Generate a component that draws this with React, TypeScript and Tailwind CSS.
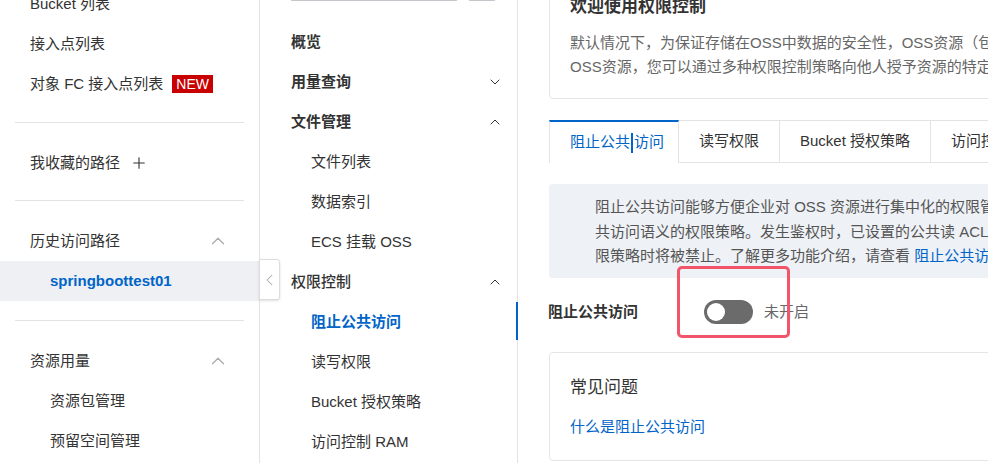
import { ChevronDown, ChevronLeft, ChevronUp, Plus } from "lucide-react";

const font = { fontFamily: '"Liberation Sans", "Noto Sans CJK SC", sans-serif' };

function SideRow({ children, indent = false, active = false, right }: { children: React.ReactNode; indent?: boolean; active?: boolean; right?: React.ReactNode }) {
  return (
    <div
      className={`h-[40px] flex items-center justify-between pr-[30px] ${indent ? "pl-[50px]" : "pl-[30px]"} ${
        active ? "bg-[#eef0f4] text-[#0064c8] font-bold" : "text-[#333]"
      }`}
    >
      <span className="flex items-center">{children}</span>
      {right}
    </div>
  );
}

function Divider() {
  return <div className="mx-[15px] h-px bg-[#e3e3e3]" />;
}

function NavRow({
  label,
  sub = false,
  weight = "",
  chevron,
  active = false,
}: {
  label: string;
  sub?: boolean;
  weight?: string;
  chevron?: "up" | "down";
  active?: boolean;
}) {
  return (
    <div
      className={`relative h-[40px] flex items-center justify-between pr-[14px] ${sub ? "pl-[51px]" : "pl-[31px]"} ${
        active ? "text-[#0064c8] font-bold" : "text-[#333]"
      } ${weight}`}
    >
      <span>{label}</span>
      {chevron === "up" && <ChevronUp size={16} strokeWidth={1.5} className="text-[#333]" />}
      {chevron === "down" && <ChevronDown size={16} strokeWidth={1.5} className="text-[#333]" />}
      {active && <div className="absolute right-[-1px] top-0 h-[38px] w-[2px] bg-[#0064c8]" />}
    </div>
  );
}

export default function App() {
  return (
    <div className="relative flex h-[463px] w-[988px] overflow-hidden bg-white text-[15px]" style={font}>
      {/* left sidebar */}
      <aside className="w-[260px] shrink-0 border-r border-[#e3e3e3]">
        <div className="-mt-[16px]">
          <SideRow>Bucket 列表</SideRow>
          <SideRow>接入点列表</SideRow>
          <SideRow>
            对象 FC 接入点列表
            <span className="ml-[9px] bg-[#c80000] px-[4px] text-[14px] leading-[18px] text-white">NEW</span>
          </SideRow>
        </div>
        <div className="mt-[18px]">
          <Divider />
        </div>
        <div className="mt-[20px]">
          <SideRow>
            我收藏的路径
            <Plus size={18} strokeWidth={1.5} className="ml-[10px] text-[#333]" />
          </SideRow>
        </div>
        <div className="mt-[17px]">
          <Divider />
        </div>
        <div className="mt-[20px]">
          <SideRow right={<ChevronUp size={22} strokeWidth={1.3} className="text-[#aaa]" />}>历史访问路径</SideRow>
          <SideRow indent active>
            springboottest01
          </SideRow>
        </div>
        <div className="mt-[19px]">
          <Divider />
        </div>
        <div className="mt-[20px]">
          <SideRow right={<ChevronUp size={22} strokeWidth={1.3} className="text-[#aaa]" />}>资源用量</SideRow>
          <SideRow indent>资源包管理</SideRow>
          <SideRow indent>预留空间管理</SideRow>
        </div>
      </aside>

      {/* second nav */}
      <nav className="w-[258px] shrink-0 border-r border-[#e3e3e3]">
        <div className="-mt-[31px] flex gap-[10px] pl-[30px]">
          <div className="h-[32px] w-[168px] rounded-[2px] border border-[#c4c6cc]" />
          <div className="h-[32px] w-[28px] rounded-[2px] border border-[#c4c6cc]" />
        </div>
        <div className="mt-[21px]">
          <NavRow label="概览" weight="font-bold" />
          <NavRow label="用量查询" weight="font-bold" chevron="down" />
          <NavRow label="文件管理" weight="font-bold" chevron="up" />
          <NavRow label="文件列表" sub />
          <NavRow label="数据索引" sub />
          <NavRow label="ECS 挂载 OSS" sub />
          <NavRow label="权限控制" weight="font-medium" chevron="up" />
          <NavRow label="阻止公共访问" sub active />
          <NavRow label="读写权限" sub />
          <NavRow label="Bucket 授权策略" sub />
          <NavRow label="访问控制 RAM" sub />
        </div>
      </nav>

      {/* collapse handle */}
      <div className="absolute left-[259px] top-[259px] flex h-[41px] w-[21px] items-center justify-center rounded-r-[3px] border border-[#dcdcdc] bg-white shadow-sm">
        <ChevronLeft size={24} strokeWidth={1.3} className="text-[#aaa]" />
      </div>

      {/* main content */}
      <main className="min-w-0 flex-1 overflow-hidden pl-[31px]">
        <div className="w-[700px]">
          <div className="-mt-[26px] rounded-[4px] border border-[#e5e5e5] px-[20px] pb-[19px] pt-[20px]">
            <h1 className="text-[17px] font-bold leading-[24px] text-[#333]">欢迎使用权限控制</h1>
            <div className="mt-[12px] whitespace-nowrap leading-[24px] text-[#666]">
              <p>默认情况下，为保证存储在OSS中数据的安全性，OSS资源（包括Bucket和Object）默认为私有权限，只有资源拥有者或被授权的用户允许访问。</p>
              <p>OSS资源，您可以通过多种权限控制策略向他人授予资源的特定权限。</p>
            </div>
          </div>

          <div className="mt-[21px] flex h-[43px] border-b border-[#e3e3e3] whitespace-nowrap">
            <div className="relative -mb-px flex w-[130px] shrink-0 items-center border-l border-r border-t-2 border-[#e3e3e3] border-t-[#0064c8] bg-white pl-[20px] text-[#0064c8]">
              阻止公共
              <span className="mx-px inline-block h-[20px] w-[2px] bg-[#0064c8]" />
              访问
            </div>
            <div className="flex shrink-0 items-center border-r border-t border-[#e3e3e3] px-[20px] text-[#333]">读写权限</div>
            <div className="flex shrink-0 items-center border-r border-t border-[#e3e3e3] px-[20px] text-[#333]">Bucket 授权策略</div>
            <div className="flex shrink-0 items-center border-r border-t border-[#e3e3e3] px-[20px] text-[#333]">访问控制 RAM</div>
          </div>

          <div className="mt-[21px] h-[94px] rounded-[3px] bg-[#eef1f6] pl-[46px] pt-[11px] leading-[24.5px] text-[#555] whitespace-nowrap">
            <p>阻止公共访问能够方便企业对 OSS 资源进行集中化的权限管理，开启后，将禁止以公</p>
            <p>共访问语义的权限策略。发生鉴权时，已设置的公共读 ACL、公共读写 ACL 以及公共权</p>
            <p>
              限策略时将被禁止。了解更多功能介绍，请查看 <span className="text-[#0064c8]">阻止公共访问</span>
            </p>
          </div>

          <div className="mt-[22px] flex h-[24px] items-center">
            <span className="-ml-px w-[156px] font-bold text-[#333]">阻止公共访问</span>
            <div className="flex h-[24px] w-[49px] items-center rounded-full bg-[#6b6b6b] pl-[3px]">
              <div className="h-[18px] w-[18px] rounded-full bg-white" />
            </div>
            <span className="ml-[11px] text-[#666]">未开启</span>
          </div>

          <div className="mt-[28px] h-[109px] rounded-[4px] border border-[#e5e5e5] px-[20px] pt-[23px]">
            <h2 className="text-[17px] leading-[24px] text-[#333]">常见问题</h2>
            <p className="mt-[15px] leading-[24px] text-[#0064c8]">什么是阻止公共访问</p>
          </div>
        </div>
      </main>

      {/* highlight annotation */}
      <div className="pointer-events-none absolute left-[677px] top-[266px] h-[72px] w-[113px] rounded-[5px] border-[3px] border-[#f2546a]" />
    </div>
  );
}
